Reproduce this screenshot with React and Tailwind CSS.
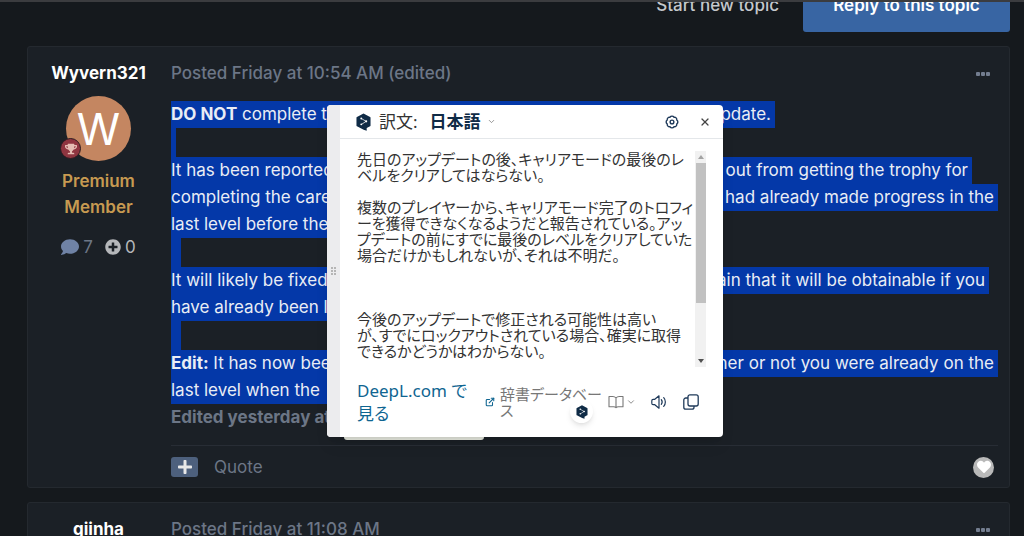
import { FaComment, FaPlusCircle, FaPlus, FaHeart, FaTrophy } from 'react-icons/fa';
import { ChevronDown, ExternalLink, X } from 'lucide-react';

const INTER = "font-['Inter',sans-serif]";
const JAPANESE = "font-['Noto_Sans','Noto_Sans_CJK_JP',sans-serif] [font-feature-settings:'palt']";

const postLines = [
  {
    start: (
      <>
        <strong>DO NOT</strong> complete the
      </>
    ),
    end: 'the update.',
    width: 'w-[604px]',
    pad: 'pr-1',
  },
  { gap: true, width: 'w-[5px]' },
  { start: 'It has been reported', end: 'out from getting the trophy for', width: 'w-[801px]', pad: 'pr-1' },
  { start: 'completing the career', end: 'had already made progress in the', width: 'w-[827px]', pad: 'pr-1' },
  { start: 'last level before the', end: '', width: 'w-[400px]', pad: '' },
  { gap: true, width: 'w-[10px]' },
  { start: 'It will likely be fixed', end: 'certain that it will be obtainable if you', width: 'w-[818px]', pad: 'pr-1' },
  { start: 'have already been l', end: '', width: 'w-[400px]', pad: '' },
  { gap: true, width: 'w-[10px]' },
  {
    start: (
      <>
        <strong>Edit:</strong> It has now been
      </>
    ),
    end: 'whether or not you were already on the',
    width: 'w-[827px]',
    pad: 'pr-1',
  },
  { start: 'last level when the', end: '', width: 'w-[400px]', pad: '' },
];

const translation = [
  ['先日のアップデートの後、キャリアモードの最後のレ', 'ベルをクリアしてはならない。'],
  ['複数のプレイヤーから、キャリアモード完了のトロフィ', 'ーを獲得できなくなるようだと報告されている。アッ', 'プデートの前にすでに最後のレベルをクリアしていた', '場合だけかもしれないが、それは不明だ。'],
  ['今後のアップデートで修正される可能性は高い', 'が、すでにロックアウトされている場合、確実に取得', 'できるかどうかはわからない。'],
];

const DeepLLogo = ({ className }) => (
  <svg viewBox="0 0 16 19" className={className} aria-hidden="true">
    <path d="M8 0.3 15 4.2a1 1 0 0 1 .5.9v8a1 1 0 0 1-.5.9l-3.6 2v2.7L8.2 17.7 1 14a1 1 0 0 1-.5-.9v-8a1 1 0 0 1 .5-.9Z" fill="#0f2b46" />
    <path d="m5.6 5.7 5.2 3.1-5.2 3.4" fill="none" stroke="#fff" strokeWidth="0.8" />
    <circle cx="5.6" cy="5.8" r="1" fill="#fff" />
    <circle cx="10.9" cy="8.8" r="1.1" fill="#fff" />
    <circle cx="5.6" cy="12" r="1" fill="#fff" />
  </svg>
);

const GearIcon = ({ className }) => (
  <svg viewBox="0 0 24 24" fill="none" stroke="currentColor" strokeWidth="2.4" className={className} aria-hidden="true">
    <path d="M3.85 8.62a4 4 0 0 1 4.78-4.77 4 4 0 0 1 6.74 0 4 4 0 0 1 4.78 4.78 4 4 0 0 1 0 6.74 4 4 0 0 1-4.77 4.78 4 4 0 0 1-6.75 0 4 4 0 0 1-4.78-4.77 4 4 0 0 1 0-6.76Z" />
    <circle cx="12" cy="12" r="3.2" />
  </svg>
);

const BookIcon = ({ className }) => (
  <svg viewBox="0 0 16 16" fill="none" stroke="currentColor" strokeWidth="1.1" strokeLinejoin="round" className={className} aria-hidden="true">
    <path d="M8 4C7 2.8 6 2.5 4.8 2.5H1v10.2h4.6c1 0 1.8.3 2.4.9.6-.6 1.400-.9 2.400-.9H15V2.500h-3.800C10 2.500 9 2.800 8 4Zm0 0v9.600" />
  </svg>
);

const SpeakerIcon = ({ className }) => (
  <svg viewBox="0 0 16 16" fill="none" stroke="currentColor" strokeWidth="1.2" strokeLinecap="round" strokeLinejoin="round" className={className} aria-hidden="true">
    <path d="M8 1.800v12.400L3.800 10.700H2.200A1.500 1.500 0 0 1 .8 9.200V6.800a1.500 1.500 0 0 1 1.400-1.500h1.600Z" />
    <path d="M10.300 5.700c1 1.300 1 3.300 0 4.600M12.700 3.700c2.200 2.300 2.200 6.300 0 8.600" />
  </svg>
);

const CopyIcon = ({ className }) => (
  <svg viewBox="0 0 16 16" fill="none" stroke="currentColor" strokeWidth="1.3" strokeLinejoin="round" className={className} aria-hidden="true">
    <rect x="5" y="0.8" width="10.200" height="11.200" rx="2" />
    <path d="M5 4H2.800a2 2 0 0 0-2 2v7.200a2 2 0 0 0 2 2H9a2 2 0 0 0 2-2V12" />
  </svg>
);

const MoreButton = () => (
  <button type="button" aria-label="More options" className="flex gap-px p-2">
    {[0, 1, 2].map((i) => (
      <span key={i} className="size-1 rounded-[1px] bg-[#737d8f]" />
    ))}
  </button>
);

const PostHeader = ({ children }) => (
  <div className="flex items-center justify-between leading-[27px] text-[#6c7686] font-medium">
    <span>{children}</span>
    <MoreButton />
  </div>
);

const Post = ({ author, aside, children }) => (
  <article className="flex rounded-[3px] border border-[#24292f] bg-[#1b2026] pt-[13px]">
    <aside className="mr-[2px] flex w-[141px] shrink-0 flex-col items-center">
      <h3 className="font-bold leading-[26px] text-white">{author}</h3>
      {aside}
    </aside>
    <div className="min-w-0 flex-1 pr-[11px]">{children}</div>
  </article>
);

const Avatar = () => (
  <div className="relative mt-[10px] flex size-[65px] items-center justify-center rounded-full bg-[#c48661] text-[44px] leading-none text-white">
    W
    <span className="absolute -left-[6px] bottom-[2px] flex size-[21px] items-center justify-center rounded-full border border-[#2a1b20] bg-[#8f3540]">
      <FaTrophy className="size-3 text-[#e5bdb4]" />
    </span>
  </div>
);

const Translator = () => (
  <div className="absolute left-[327px] top-[103px]">
    <div className="absolute bottom-[-3px] left-[17px] h-5 w-[140px] rounded-[3px] bg-[#e8ebe0]" />
    <section className={`relative flex w-[396px] overflow-hidden rounded-[4px] bg-white shadow-lg ${JAPANESE}`}>
      <div className="flex w-[13px] shrink-0 items-center justify-center bg-[#ececee]">
        <span className="grid grid-cols-2 gap-px">
          {[0, 1, 2, 3, 4, 5].map((i) => (
            <span key={i} className="size-[2px] bg-[#b5b5b5]" />
          ))}
        </span>
      </div>
      <div className="min-w-0 flex-1">
        <header className="flex h-[34px] items-center border-b border-[#e4e7ea] pl-4 pr-3">
          <DeepLLogo className="h-[18px] w-[15px]" />
          <span className="ml-2 text-[17px] text-[#333]">訳文:</span>
          <button type="button" className="ml-3 flex items-center gap-[6px] text-[17px] font-bold text-[#0f2b46]">
            日本語
            <ChevronDown className="size-[9px] text-[#777]" />
          </button>
          <button type="button" aria-label="Settings" className="ml-auto text-[#1f3a5a]">
            <GearIcon className="size-[14px]" />
          </button>
          <button type="button" aria-label="Close" className="ml-5 text-[#444]">
            <X className="size-3" strokeWidth={2.4} />
          </button>
        </header>

        <div className="mt-3 flex min-h-[216px] justify-between pl-[17px] pr-[17px]">
          <div className="whitespace-nowrap text-[15px] leading-[16px] text-[#333]">
            {translation.map((lines, idx) => (
              <p key={idx} className={idx === 0 ? '' : idx === 1 ? 'mt-4' : 'mt-12'}>
                {lines.map((line) => (
                  <span key={line} className="block">
                    {line}
                  </span>
                ))}
              </p>
            ))}
          </div>
          <div className="flex w-[11px] shrink-0 flex-col items-center bg-[#f1f1f1]">
            <span className="my-1 border-x-[3px] border-b-4 border-x-transparent border-b-[#a3a3a3]" />
            <span className="h-[140px] w-[10px] bg-[#c1c1c1]" />
            <span className="mb-1 mt-auto border-x-[3px] border-t-4 border-x-transparent border-t-[#505050]" />
          </div>
        </div>

        <footer className="flex h-[70px] items-center pl-[17px] pr-6">
          <a href="#deepl" className="w-[128px] text-[17px] leading-[23px] text-[#0f6591]">
            DeepL.com で
            <br />
            見る
          </a>
          <ExternalLink className="size-[10px] shrink-0 text-[#0f6591]" strokeWidth={2.6} />
          <button type="button" className="ml-[5px] flex items-center text-[#777]">
            <span className="w-[108px] whitespace-nowrap text-left text-[15px] leading-[16px]">
              辞書データベー
              <br />ス
            </span>
            <BookIcon className="size-4" />
            <ChevronDown className="ml-[2px] size-[10px]" />
          </button>
          <button type="button" aria-label="Listen" className="ml-auto text-[#1f3a5a]">
            <SpeakerIcon className="size-4" />
          </button>
          <button type="button" aria-label="Copy" className="ml-4 text-[#1f3a5a]">
            <CopyIcon className="size-4" />
          </button>
        </footer>
      </div>
      <button type="button" aria-label="Translate" className="absolute bottom-[14px] left-[243px] flex size-[23px] items-center justify-center rounded-full bg-white shadow-md">
        <DeepLLogo className="h-[14px] w-3" />
      </button>
    </section>
  </div>
);

export default function App() {
  return (
    <div className={`relative h-screen overflow-hidden border-t-2 border-[#3b3c3f] bg-[#15191d] text-[17px] ${INTER}`}>
      <nav className="flex h-[30px] items-end justify-end gap-6 overflow-hidden pr-[14px]">
        <button type="button" className="h-[53px] shrink-0 font-medium text-[#c5c8cc]">
          Start new topic
        </button>
        <button type="button" className="h-[53px] w-[207px] shrink-0 rounded-[3px] bg-[#3865a3] font-semibold text-white">
          Reply to this topic
        </button>
      </nav>

      <main className="mt-[14px] flex flex-col gap-[14px] pl-[27px] pr-[14px]">
        <Post
          author="Wyvern321"
          aside={
            <>
              <Avatar />
              <p className="mt-[7px] text-center font-semibold leading-[26px] text-[#c79a51]">
                Premium
                <br />
                Member
              </p>
              <p className="mt-[14px] flex items-center gap-1 leading-[26px]">
                <FaComment className="size-[18px] text-[#6f82a5]" />
                <span className="text-[#6c7686]">7</span>
                <FaPlusCircle className="ml-2 size-4 text-[#b5b7ba]" />
                <span className="text-[#b5b7ba]">0</span>
              </p>
            </>
          }
        >
          <PostHeader>Posted Friday at 10:54 AM (edited)</PostHeader>
          <div className="mt-[14px] whitespace-nowrap leading-[27px] text-[#e9edf5]">
            {postLines.map((line, idx) =>
              line.gap ? (
                <div key={idx} className={`h-[29px] bg-[#0438a8] ${line.width}`} />
              ) : (
                <div key={idx} className={`flex max-w-full justify-between bg-[#0438a8] ${line.width} ${line.pad}`}>
                  <span>{line.start}</span>
                  <span>{line.end}</span>
                </div>
              ),
            )}
          </div>
          <p className="font-bold leading-[27px] text-[#6c7686]">Edited yesterday at</p>
          <div className="mt-[14px] flex items-center border-t border-[#282d35] pb-[7px] pt-2">
            <button type="button" aria-label="Multiquote" className="flex h-5 w-[27px] items-center justify-center rounded-[3px] bg-[#4d607d] text-[#e8e8e8]">
              <FaPlus className="size-4" />
            </button>
            <button type="button" className="ml-4 leading-[26px] text-[#6c7686]">
              Quote
            </button>
            <button type="button" aria-label="Like" className="ml-auto mr-1 flex size-[21px] items-center justify-center rounded-full bg-[#b9b9b9] text-white">
              <FaHeart className="size-[14px]" />
            </button>
          </div>
        </Post>

        <Post author="giinha">
          <PostHeader>Posted Friday at 11:08 AM</PostHeader>
        </Post>
      </main>

      <Translator />
    </div>
  );
}
